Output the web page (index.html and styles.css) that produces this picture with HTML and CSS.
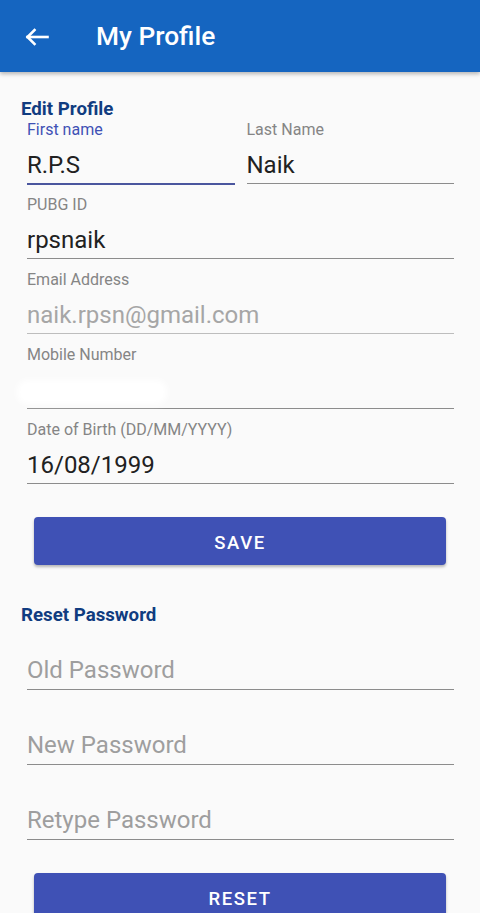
FILE: index.html
```html
<!DOCTYPE html>
<html>
<head>
<meta charset="utf-8">
<link rel="stylesheet" href="styles.css">
</head>
<body>
<header class="appbar">
  <svg class="back" width="24" height="18" viewBox="0 0 24 18" fill="none" stroke="#fff" stroke-width="2.6" stroke-linecap="square">
    <path d="M2.5 9H22.5"/>
    <path d="M9.5 2L2.5 9L9.5 16" stroke-linejoin="miter"/>
  </svg>
  <h1 class="title">My Profile</h1>
</header>
<main class="content">
  <h2 class="section">Edit Profile</h2>
  <div class="row">
    <div class="field">
      <div class="label label-focus">First name</div>
      <div class="input input-focus">R.P.S</div>
    </div>
    <div class="field">
      <div class="label">Last Name</div>
      <div class="input">Naik</div>
    </div>
  </div>
  <div class="field">
    <div class="label">PUBG ID</div>
    <div class="input">rpsnaik</div>
  </div>
  <div class="field">
    <div class="label">Email Address</div>
    <div class="input input-disabled">naik.rpsn@gmail.com</div>
  </div>
  <div class="field">
    <div class="label">Mobile Number</div>
    <div class="input"><span class="redact"></span></div>
  </div>
  <div class="field">
    <div class="label">Date of Birth (DD/MM/YYYY)</div>
    <div class="input">16/08/1999</div>
  </div>
  <button class="btn btn-save">SAVE</button>
  <h2 class="section section-reset">Reset Password</h2>
  <div class="field">
    <div class="label"></div>
    <div class="input input-hint">Old Password</div>
  </div>
  <div class="field">
    <div class="label"></div>
    <div class="input input-hint">New Password</div>
  </div>
  <div class="field">
    <div class="label"></div>
    <div class="input input-hint">Retype Password</div>
  </div>
  <button class="btn btn-reset">RESET</button>
</main>
</body>
</html>
```
FILE: styles.css
```css
* { box-sizing: border-box; }
html, body {
  margin: 0;
  padding: 0;
  background: #fafafa;
  font-family: Roboto, "Noto Sans", sans-serif;
  overflow: hidden;
}
.appbar {
  height: 72px;
  background: #1565c0;
  display: flex;
  align-items: center;
  padding-left: 25px;
  box-shadow: 0 2px 4px rgba(0,0,0,0.28);
  position: relative;
  z-index: 1;
}
.back {
  display: block;
  margin-top: 1px;
}
.title {
  margin: 0 0 0 47px;
  color: #fff;
  font-size: 26.3px;
  font-weight: 500;
  line-height: 30px;
}
.content {
  padding: 27px 0 0 0;
}
.section {
  margin: 0 0 1px 21px;
  font-size: 18.7px;
  font-weight: 700;
  line-height: 20px;
  color: #103c80;
}
.section-reset {
  margin-top: 40px;
  margin-bottom: 0;
}
.row {
  display: grid;
  grid-template-columns: 1fr 1fr;
  column-gap: 12px;
  margin: 0 26px 0 27px;
}
.row .field { margin-left: 0; margin-right: 0; }
.field {
  margin: 0 26px 11px 27px;
}
.label {
  height: 18px;
  font-size: 16px;
  line-height: 20px;
  color: #858585;
  white-space: nowrap;
}
.label-focus { color: #3f51b5; }
.input {
  margin-top: 12px;
  height: 34px;
  font-size: 24px;
  line-height: 30px;
  padding-bottom: 3px;
  color: #212121;
  border-bottom: 1px solid #8c8c8c;
  white-space: nowrap;
}
.input-focus {
  height: 35px;
  border-bottom: 2px solid #4a569e;
  margin-bottom: -1px;
}
.input-disabled {
  color: #a6a6a6;
  border-bottom-color: #bdbdbd;
}
.input-hint {
  color: #9e9e9e;
  height: 35px;
  padding-bottom: 4px;
  margin-bottom: -1px;
}
.redact {
  display: inline-block;
  width: 150px;
  height: 24px;
  margin-left: -10px;
  vertical-align: middle;
  background: #ffffff;
  border-radius: 10px;
  filter: blur(3px);
}
.btn {
  display: block;
  width: 412px;
  height: 48px;
  margin: 33px 0 0 34px;
  border: none;
  border-radius: 4px;
  background: #3f51b5;
  color: #fff;
  font-family: Roboto, "Noto Sans", sans-serif;
  font-size: 18.5px;
  font-weight: 500;
  letter-spacing: 1.6px;
  box-shadow: 0 2px 3px rgba(0,0,0,0.28);
  padding: 3px 0 0 0;
}
.btn-reset {
  margin-top: 34px;
}
```
